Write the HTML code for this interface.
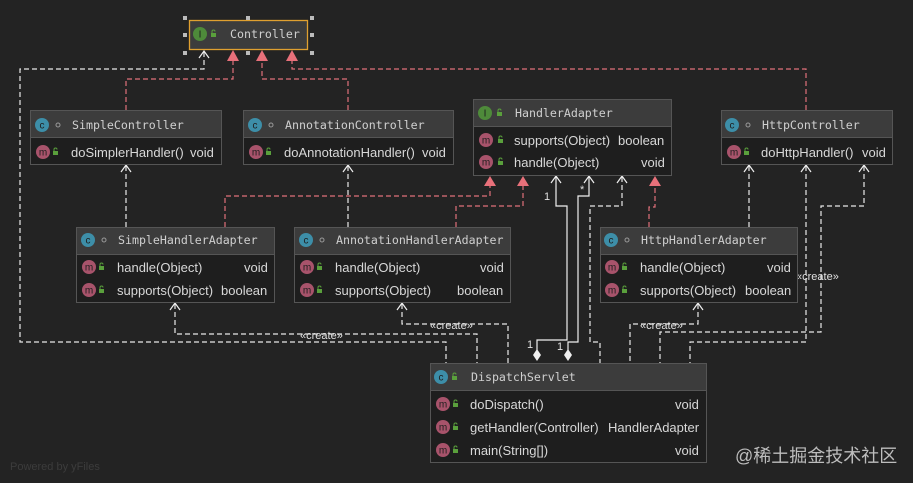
<!DOCTYPE html><html><head><meta charset="utf-8"><style>
html,body{margin:0;padding:0;background:#232323;}
svg{display:block}
.h{font-family:"DejaVu Sans Mono","Liberation Mono",monospace;font-size:11.6px;fill:#d0d0d0}
.t{font-family:"Liberation Sans",sans-serif;font-size:13px;fill:#d8d8d8}
.s{font-family:"Liberation Sans",sans-serif;font-size:11px;fill:#e0e0e0}
.ic{font-family:"Liberation Sans",sans-serif;font-size:10px;fill:#1e1e1e;text-anchor:middle}
</style></head><body>
<svg width="913" height="483" viewBox="0 0 913 483" xmlns="http://www.w3.org/2000/svg">
<defs>
<g id="lock"><rect x="0" y="3" width="5" height="4" fill="#5aa03c"/><path d="M1 3V1.5a1.5 1.5 0 0 1 3 0" stroke="#5aa03c" fill="none" stroke-width="1"/></g>
</defs>
<g fill="none" stroke-width="1.2">
<g stroke="#e8e8e8" stroke-dasharray="5,3">
<path d="M204 52V69H20V342H446V363"/>
<path d="M175 304V334H477V363"/>
<path d="M402 304V324H508V363"/>
<path d="M698 304V324H630V363"/>
<path d="M126 227V166"/>
<path d="M348 227V166"/>
<path d="M749 227V166"/>
<path d="M622 177V206H590V342H600V363"/>
<path d="M806 166V342H690V363"/>
<path d="M864 166V206H821V332H660V363"/>
</g>
<g stroke="#e0707a" stroke-dasharray="5,3">
<path d="M126 110V79H233V60"/>
<path d="M348 110V79H262V60"/>
<path d="M806 110V69H292V60"/>
<path d="M225 227V196H490V185"/>
<path d="M456 227V206H523V185"/>
<path d="M649 227V207H655V185"/>
</g>
<g stroke="#f0f0f0">
<path d="M556 177V206H567V340H537V350"/>
<path d="M589 177V196H578V342H568V350"/>
</g>
<g stroke="#f0f0f0">
<path d="M199 58L204 51L209 58"/><path d="M121 172L126 165L131 172"/><path d="M343 172L348 165L353 172"/>
<path d="M170 310L175 303L180 310"/><path d="M397 310L402 303L407 310"/><path d="M693 310L698 303L703 310"/>
<path d="M551 183L556 176L561 183"/><path d="M584 183L589 176L594 183"/><path d="M617 183L622 176L627 183"/>
<path d="M744 172L749 165L754 172"/><path d="M801 172L806 165L811 172"/><path d="M859 172L864 165L869 172"/>
</g>
</g>
<g fill="#e8707a">
<path d="M233 50l-6 11h12z"/><path d="M262 50l-6 11h12z"/><path d="M292 50l-6 11h12z"/>
<path d="M490 176l-6 10h12z"/><path d="M523 176l-6 10h12z"/><path d="M655 176l-6 10h12z"/>
</g>
<g fill="#f0f0f0"><path d="M537 349l4 6l-4 6l-4-6z"/><path d="M568 349l4 6l-4 6l-4-6z"/></g>
<g class="s">
<text x="544" y="200">1</text><text x="580" y="193">*</text><text x="527" y="348">1</text><text x="557" y="350">1</text>
<text x="300" y="339">«create»</text><text x="430" y="329">«create»</text><text x="640" y="329">«create»</text><text x="796" y="280">«create»</text>
</g>

<rect x="189.5" y="20.5" width="118" height="29" fill="#3c3c3c" stroke="#e0a030" stroke-width="1.3"/>
<circle cx="200" cy="34" r="7" fill="#4e8a3a"/><text class="ic" x="200" y="37.5">I</text><use href="#lock" x="211" y="30"/>
<text class="h" x="230" y="38">Controller</text>
<g fill="#bbb"><rect x="183" y="16" width="4" height="4"/><rect x="246" y="16" width="4" height="4"/><rect x="310" y="16" width="4" height="4"/><rect x="183" y="33" width="4" height="4"/><rect x="310" y="33" width="4" height="4"/><rect x="183" y="51" width="4" height="4"/><rect x="246" y="51" width="4" height="4"/><rect x="310" y="51" width="4" height="4"/></g>

<g stroke="#555" stroke-width="1">
<rect x="30.5" y="110.5" width="191" height="54" fill="#1e1e1e"/><rect x="30.5" y="110.5" width="191" height="27" fill="#3c3c3c"/>
<rect x="243.5" y="110.5" width="210" height="54" fill="#1e1e1e"/><rect x="243.5" y="110.5" width="210" height="27" fill="#3c3c3c"/>
<rect x="473.5" y="99.5" width="198" height="76" fill="#1e1e1e"/><rect x="473.5" y="99.5" width="198" height="27" fill="#3c3c3c"/>
<rect x="721.5" y="110.5" width="171" height="54" fill="#1e1e1e"/><rect x="721.5" y="110.5" width="171" height="27" fill="#3c3c3c"/>
<rect x="76.5" y="227.5" width="198" height="75" fill="#1e1e1e"/><rect x="76.5" y="227.5" width="198" height="27" fill="#3c3c3c"/>
<rect x="294.5" y="227.5" width="216" height="75" fill="#1e1e1e"/><rect x="294.5" y="227.5" width="216" height="27" fill="#3c3c3c"/>
<rect x="600.5" y="227.5" width="197" height="75" fill="#1e1e1e"/><rect x="600.5" y="227.5" width="197" height="27" fill="#3c3c3c"/>
<rect x="430.5" y="363.5" width="276" height="99" fill="#1e1e1e"/><rect x="430.5" y="363.5" width="276" height="27" fill="#3c3c3c"/>
</g>
<g>
<circle cx="42" cy="125" r="7" fill="#3d8ea8"/><text class="ic" x="42" y="128.5">c</text><circle cx="58" cy="125" r="2" fill="none" stroke="#999"/><text class="h" x="72" y="129">SimpleController</text>
<circle cx="255" cy="125" r="7" fill="#3d8ea8"/><text class="ic" x="255" y="128.5">c</text><circle cx="271" cy="125" r="2" fill="none" stroke="#999"/><text class="h" x="285" y="129">AnnotationController</text>
<circle cx="485" cy="113" r="7" fill="#4e8a3a"/><text class="ic" x="485" y="116.5">I</text><use href="#lock" x="497" y="109"/><text class="h" x="515" y="117">HandlerAdapter</text>
<circle cx="732" cy="125" r="7" fill="#3d8ea8"/><text class="ic" x="732" y="128.5">c</text><circle cx="748" cy="125" r="2" fill="none" stroke="#999"/><text class="h" x="762" y="129">HttpController</text>
<circle cx="88" cy="240" r="7" fill="#3d8ea8"/><text class="ic" x="88" y="243.5">c</text><circle cx="104" cy="240" r="2" fill="none" stroke="#999"/><text class="h" x="118" y="244">SimpleHandlerAdapter</text>
<circle cx="306" cy="240" r="7" fill="#3d8ea8"/><text class="ic" x="306" y="243.5">c</text><circle cx="322" cy="240" r="2" fill="none" stroke="#999"/><text class="h" x="336" y="244">AnnotationHandlerAdapter</text>
<circle cx="611" cy="240" r="7" fill="#3d8ea8"/><text class="ic" x="611" y="243.5">c</text><circle cx="627" cy="240" r="2" fill="none" stroke="#999"/><text class="h" x="641" y="244">HttpHandlerAdapter</text>
<circle cx="441" cy="377" r="7" fill="#3d8ea8"/><text class="ic" x="441" y="380.5">c</text><use href="#lock" x="452" y="373"/><text class="h" x="471" y="381">DispatchServlet</text>
</g>
<g>
<circle cx="43" cy="152" r="7" fill="#a8536b"/><text class="ic" x="43" y="155.5">m</text><use href="#lock" x="53" y="148"/>
<text class="t" x="71" y="157">doSimplerHandler()</text><text class="t" x="190" y="157">void</text>
<circle cx="256" cy="152" r="7" fill="#a8536b"/><text class="ic" x="256" y="155.5">m</text><use href="#lock" x="266" y="148"/>
<text class="t" x="284" y="157">doAnnotationHandler()</text><text class="t" x="422" y="157">void</text>
<circle cx="486" cy="140" r="7" fill="#a8536b"/><text class="ic" x="486" y="143.5">m</text><use href="#lock" x="498" y="136"/>
<text class="t" x="514" y="145">supports(Object)</text><text class="t" x="618" y="145">boolean</text>
<circle cx="486" cy="162" r="7" fill="#a8536b"/><text class="ic" x="486" y="165.5">m</text><use href="#lock" x="498" y="158"/>
<text class="t" x="514" y="167">handle(Object)</text><text class="t" x="641" y="167">void</text>
<circle cx="734" cy="152" r="7" fill="#a8536b"/><text class="ic" x="734" y="155.5">m</text><use href="#lock" x="744" y="148"/>
<text class="t" x="761" y="157">doHttpHandler()</text><text class="t" x="862" y="157">void</text>
<circle cx="89" cy="267" r="7" fill="#a8536b"/><text class="ic" x="89" y="270.5">m</text><use href="#lock" x="99" y="263"/>
<text class="t" x="117" y="272">handle(Object)</text><text class="t" x="244" y="272">void</text>
<circle cx="89" cy="290" r="7" fill="#a8536b"/><text class="ic" x="89" y="293.5">m</text><use href="#lock" x="99" y="286"/>
<text class="t" x="117" y="295">supports(Object)</text><text class="t" x="221" y="295">boolean</text>
<circle cx="307" cy="267" r="7" fill="#a8536b"/><text class="ic" x="307" y="270.5">m</text><use href="#lock" x="317" y="263"/>
<text class="t" x="335" y="272">handle(Object)</text><text class="t" x="480" y="272">void</text>
<circle cx="307" cy="290" r="7" fill="#a8536b"/><text class="ic" x="307" y="293.5">m</text><use href="#lock" x="317" y="286"/>
<text class="t" x="335" y="295">supports(Object)</text><text class="t" x="457" y="295">boolean</text>
<circle cx="612" cy="267" r="7" fill="#a8536b"/><text class="ic" x="612" y="270.5">m</text><use href="#lock" x="622" y="263"/>
<text class="t" x="640" y="272">handle(Object)</text><text class="t" x="767" y="272">void</text>
<circle cx="612" cy="290" r="7" fill="#a8536b"/><text class="ic" x="612" y="293.5">m</text><use href="#lock" x="622" y="286"/>
<text class="t" x="640" y="295">supports(Object)</text><text class="t" x="745" y="295">boolean</text>
<circle cx="443" cy="404" r="7" fill="#a8536b"/><text class="ic" x="443" y="407.5">m</text><use href="#lock" x="453" y="400"/>
<text class="t" x="470" y="409">doDispatch()</text><text class="t" x="675" y="409">void</text>
<circle cx="443" cy="427" r="7" fill="#a8536b"/><text class="ic" x="443" y="430.5">m</text><use href="#lock" x="453" y="423"/>
<text class="t" x="470" y="432">getHandler(Controller)</text><text class="t" x="608" y="432">HandlerAdapter</text>
<circle cx="443" cy="450" r="7" fill="#a8536b"/><text class="ic" x="443" y="453.5">m</text><use href="#lock" x="453" y="446"/>
<text class="t" x="470" y="455">main(String[])</text><text class="t" x="675" y="455">void</text>
</g>
<text x="10" y="470" font-family="Liberation Sans,sans-serif" font-size="11" fill="#3c3c3c">Powered by yFiles</text>
<text x="735" y="462" font-family="Liberation Sans,'Noto Sans CJK SC',sans-serif" font-size="18" fill="#bdbdbd">@稀土掘金技术社区</text>
</svg>
</body></html>
